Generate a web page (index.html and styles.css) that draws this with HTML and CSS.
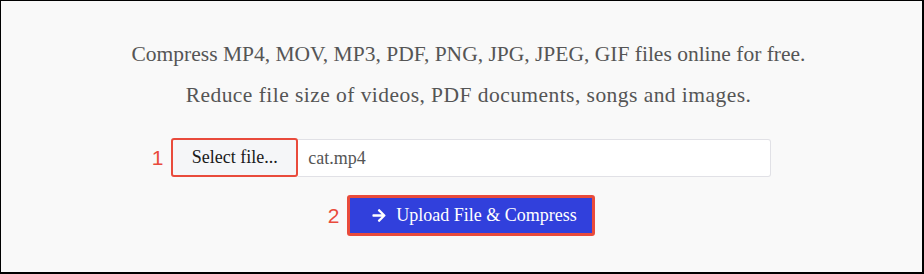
FILE: index.html
```html
<!DOCTYPE html>
<html lang="en">
<head>
    <meta charset="UTF-8">
    <meta name="viewport" content="width=device-width, initial-scale=1.0">
    <title>Compress Files</title>
    <link rel="stylesheet" href="styles.css">
</head>
<body>
    <div class="frame">
        <div class="intro">
            <p>Compress MP4, MOV, MP3, PDF, PNG, JPG, JPEG, GIF files online for free.</p>
            <p class="sub">Reduce file size of videos, PDF documents, songs and images.</p>
        </div>

        <div class="row">
            <span class="step">1</span>
            <div class="file-group">
                <button class="select-btn">Select file...</button>
                <input type="text" class="file-name" value="cat.mp4" readonly>
            </div>
        </div>

        <div class="row row-upload">
            <span class="step">2</span>
            <button class="upload-btn">
                <svg class="arrow" width="14" height="15" viewBox="0 0 448 512">
                    <path fill="currentColor" d="M190.5 66.9l22.2-22.2c9.4-9.4 24.6-9.4 33.9 0L441 239c9.4 9.4 9.4 24.6 0 33.9L246.6 467.3c-9.4 9.4-24.6 9.4-33.9 0l-22.2-22.2c-9.5-9.5-9.3-25 .4-34.3L311.4 296H24c-13.3 0-24-10.7-24-24v-32c0-13.3 10.7-24 24-24h287.4L190.9 101.2c-9.8-9.3-10-24.8-.4-34.3z"/>
                </svg>
                Upload File &amp; Compress
            </button>
        </div>
    </div>
</body>
</html>
```

FILE: styles.css
```css
body {
    margin: 0;
    font-family: "Liberation Serif", "DejaVu Serif", serif;
}
.frame {
    box-sizing: border-box;
    height: 274px;
    background: #f9f9f9;
    border-top: 1px solid #000;
    border-left: 1px solid #000;
    border-right: 2px solid #000;
    border-bottom: 2px solid #000;
    padding-top: 40px;
}
.intro {
    text-align: center;
    color: #555;
    font-size: 21.5px;
    padding-left: 14px;
}
.intro p {
    margin: 0 0 15px;
    line-height: 26px;
}
.intro p:last-child {
    margin-bottom: 0;
}
.intro .sub {
    letter-spacing: 0.45px;
}
.row {
    display: flex;
    justify-content: center;
    align-items: center;
    margin-top: 30px;
}
.step {
    font-family: "Liberation Sans", Arial, sans-serif;
    font-size: 21px;
    color: #e94b3c;
    margin-right: 8px;
}
.file-group {
    display: flex;
    width: 600px;
}
.select-btn {
    font-family: inherit;
    font-size: 18px;
    color: #1a1a1a;
    background: #f5f6f8;
    border: 2px solid #e94b3c;
    border-radius: 3px;
    width: 127px;
    height: 39px;
    padding: 0;
    cursor: pointer;
}
.file-name {
    flex: 1;
    font-family: inherit;
    font-size: 18px;
    color: #555;
    background: #fff;
    border: 1px solid #e1e1e6;
    border-left: none;
    border-radius: 0 3px 3px 0;
    height: 38px;
    box-sizing: border-box;
    margin-top: 1px;
    padding: 0 10px;
}
.row-upload {
    margin-top: 18px;
}
.upload-btn {
    display: flex;
    align-items: center;
    gap: 10px;
    font-family: inherit;
    font-size: 18px;
    color: #fff;
    background: #3140dc;
    border: 3px solid #e94b3c;
    border-radius: 3px;
    width: 248px;
    height: 41px;
    padding: 0 0 0 22px;
    cursor: pointer;
}
.arrow {
    flex: none;
}
```
